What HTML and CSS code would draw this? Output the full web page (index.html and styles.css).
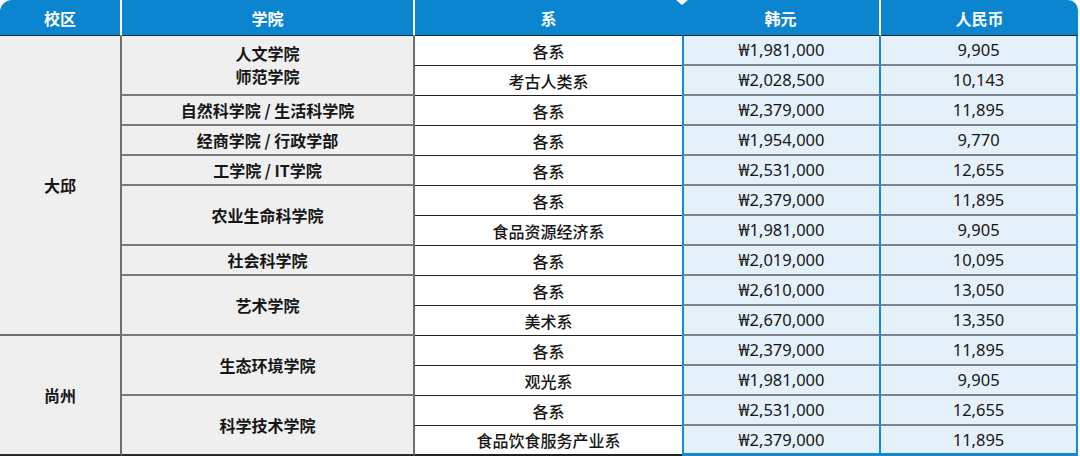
FILE: index.html
```html
<!DOCTYPE html>
<html lang="zh">
<head>
<meta charset="utf-8">
<link rel="stylesheet" href="styles.css">
</head>
<body>
<table class="fees">
  <colgroup>
    <col class="c1"><col class="c2"><col class="c3"><col class="c4"><col class="c5">
  </colgroup>
  <thead>
    <tr>
      <th class="h1">校区</th>
      <th class="h2">学院</th>
      <th class="h3">系</th>
      <th class="h4">韩元</th>
      <th class="h5">人民币</th>
    </tr>
  </thead>
  <tbody>
    <tr>
      <td class="campus" rowspan="10">大邱</td>
      <td class="college two" rowspan="2">人文学院<br>师范学院</td>
      <td class="dept">各系</td><td class="krw">₩1,981,000</td><td class="cny">9,905</td>
    </tr>
    <tr><td class="dept">考古人类系</td><td class="krw">₩2,028,500</td><td class="cny">10,143</td></tr>
    <tr><td class="college">自然科学院 / 生活科学院</td><td class="dept">各系</td><td class="krw">₩2,379,000</td><td class="cny">11,895</td></tr>
    <tr><td class="college">经商学院 / 行政学部</td><td class="dept">各系</td><td class="krw">₩1,954,000</td><td class="cny">9,770</td></tr>
    <tr><td class="college">工学院 / IT学院</td><td class="dept">各系</td><td class="krw">₩2,531,000</td><td class="cny">12,655</td></tr>
    <tr><td class="college" rowspan="2">农业生命科学院</td><td class="dept">各系</td><td class="krw">₩2,379,000</td><td class="cny">11,895</td></tr>
    <tr><td class="dept">食品资源经济系</td><td class="krw">₩1,981,000</td><td class="cny">9,905</td></tr>
    <tr><td class="college">社会科学院</td><td class="dept">各系</td><td class="krw">₩2,019,000</td><td class="cny">10,095</td></tr>
    <tr><td class="college" rowspan="2">艺术学院</td><td class="dept">各系</td><td class="krw">₩2,610,000</td><td class="cny">13,050</td></tr>
    <tr><td class="dept">美术系</td><td class="krw">₩2,670,000</td><td class="cny">13,350</td></tr>
    <tr>
      <td class="campus last" rowspan="4">尚州</td>
      <td class="college" rowspan="2">生态环境学院</td>
      <td class="dept">各系</td><td class="krw">₩2,379,000</td><td class="cny">11,895</td>
    </tr>
    <tr><td class="dept">观光系</td><td class="krw">₩1,981,000</td><td class="cny">9,905</td></tr>
    <tr><td class="college last" rowspan="2">科学技术学院</td><td class="dept">各系</td><td class="krw">₩2,531,000</td><td class="cny">12,655</td></tr>
    <tr class="final"><td class="dept">食品饮食服务产业系</td><td class="krw">₩2,379,000</td><td class="cny">11,895</td></tr>
  </tbody>
</table>
</body>
</html>
```
FILE: styles.css
```css
* { box-sizing: border-box; }
html, body { margin: 0; padding: 0; background: #ffffff; }
body {
  font-family: "Noto Sans CJK SC", "Noto Sans", sans-serif;
  color: #161616;
  font-size: 16px;
}
.fees {
  width: 1078px;
  table-layout: fixed;
  border-collapse: separate;
  border-spacing: 0;
}
.c1 { width: 122px; }
.c2 { width: 293px; }
.c3 { width: 267px; }
.c4 { width: 199px; }
.c5 { width: 197px; }

.fees thead tr { height: 36px; }
.fees th {
  background: #0b85cf;
  color: #ffffff;
  font-weight: 700;
  font-size: 16px;
  padding: 0;
  border-bottom: 1px solid #1d2a33;
  position: relative;
}
.h1 { border-top-left-radius: 12px; border-right: 2px solid #ffffff; }
.h2 { border-right: 2px solid #ffffff; }
.h4 { border-right: 2px solid #ffffff; }
.h5 { border-top-right-radius: 10px; }
.h4::before {
  content: "";
  position: absolute;
  left: -6px;
  top: 0;
  border-left: 6px solid transparent;
  border-right: 6px solid transparent;
  border-top: 5px solid #ffffff;
}

.fees tbody tr { height: 30px; }
.fees td {
  padding: 0;
  text-align: center;
  vertical-align: middle;
  line-height: 20px;
}
.campus {
  background: #efefef;
  font-weight: 700;
  border-right: 2px solid #6f6f6f;
  border-bottom: 2px solid #6f6f6f;
}
.college {
  background: #efefef;
  font-weight: 700;
  border-right: 2px solid #6f6f6f;
  border-bottom: 2px solid #7a7a7a;
}
.college.two { line-height: 23px; }
.campus.last, .college.last { border-bottom: 2px solid #2a2a2a; }
.dept {
  background: #ffffff;
  font-weight: 500;
  border-bottom: 1px solid #222222;
}
.krw, .cny {
  font-family: "Noto Sans", "Noto Sans CJK SC", sans-serif;
  font-size: 16.5px;
  background: #e5f1fa;
  border-right: 2px solid #1689d4;
  border-bottom: 2px solid #7d8388;
}
.krw { border-left: 2px solid #1689d4; }
.final .dept { border-bottom: 2px solid #222222; }
.final .krw, .final .cny { border-bottom: 3px solid #1689d4; }
```
